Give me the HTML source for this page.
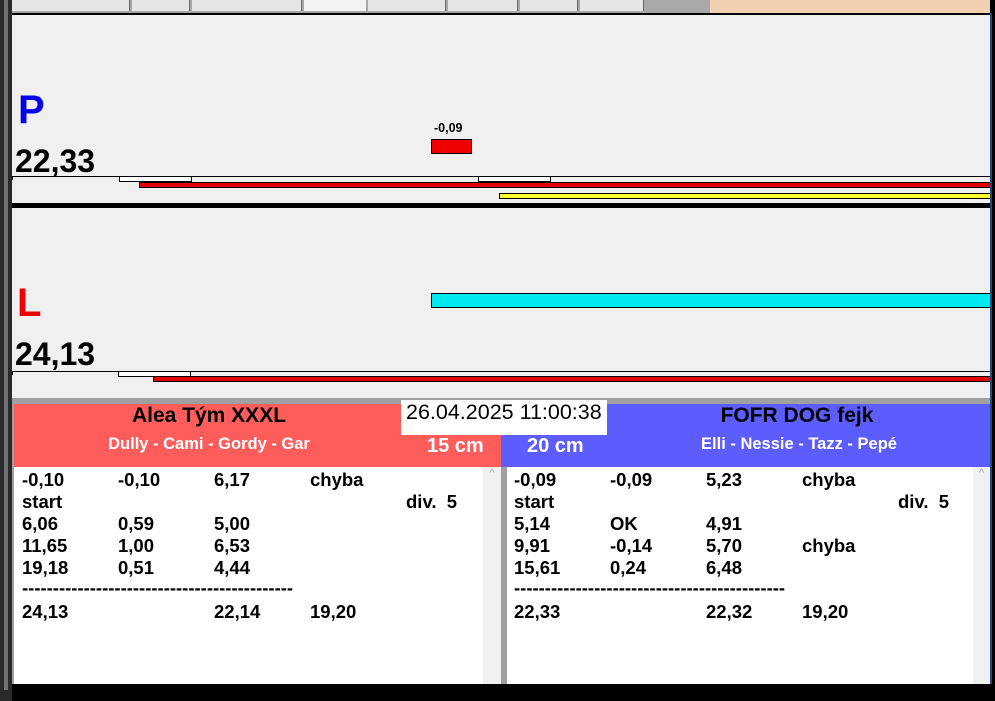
<!DOCTYPE html><html><head><meta charset="utf-8"><style>
*{margin:0;padding:0;box-sizing:border-box}
body{width:995px;height:701px;background:#000;position:relative;overflow:hidden;font-family:"Liberation Sans",Arial,sans-serif}
.a{position:absolute}
.b{font-weight:bold}
.row{position:absolute;font-weight:bold;font-size:18.5px;color:#000;white-space:nowrap}
</style></head><body>
<div class="a" style="left:0;top:0;width:990px;height:13px;background:#a8a8a8"></div>
<div class="a" style="left:710px;top:0;width:280px;height:13px;background:#f0d0b0"></div>
<div class="a" style="left:6px;top:0;width:700px;height:11px;display:flex;gap:2px">
<div style="width:124px;background:#e6e6e6;border-right:1px solid #666"></div><div style="width:58px;background:#e6e6e6;border-right:1px solid #666"></div><div style="width:110px;background:#e6e6e6;border-right:1px solid #666"></div><div style="width:62px;background:#f4f4f4"></div><div style="width:78px;background:#e6e6e6;border-right:1px solid #666"></div><div style="width:70px;background:#e6e6e6;border-right:1px solid #666"></div><div style="width:58px;background:#e6e6e6;border-right:1px solid #666"></div><div style="width:64px;background:#e6e6e6;border-right:1px solid #666"></div></div>
<div class="a" style="left:0;top:0;width:12px;height:701px;background:#2a2a2a"></div>
<div class="a" style="left:4px;top:0;width:4px;height:690px;background:#707070"></div>
<!-- upper panel -->
<div class="a" style="left:12px;top:13px;width:978px;height:191px;background:#f0f0f0;border-top:2px solid #000"></div>
<div class="a b" style="left:18px;top:88px;font-size:40px;color:#0000ee">P</div>
<div class="a b" style="left:15px;top:143px;font-size:32px">22,33</div>
<div class="a b" style="left:434px;top:121px;font-size:12.5px">-0,09</div>
<div class="a" style="left:431px;top:139px;width:41px;height:15px;background:#f00000;border:1px solid #000"></div>
<div class="a" style="left:12px;top:176px;width:978px;height:1px;background:#000"></div>
<div class="a" style="left:12px;top:176px;width:1px;height:4px;background:#000"></div>
<div class="a" style="left:119px;top:176px;width:73px;height:6px;background:#fff;border:1px solid #000"></div>
<div class="a" style="left:478px;top:176px;width:73px;height:6px;background:#fff;border:1px solid #000"></div>
<div class="a" style="left:139px;top:182px;width:851px;height:6px;background:#e00000;border:1px solid #000;border-right:none"></div>
<div class="a" style="left:499px;top:193px;width:491px;height:6px;background:#ffff30;border:1px solid #000;border-right:none"></div>
<div class="a" style="left:12px;top:203px;width:978px;height:5px;background:#000"></div>
<!-- lower panel -->
<div class="a" style="left:12px;top:208px;width:978px;height:190px;background:#f0f0f0"></div>
<div class="a b" style="left:17px;top:281px;font-size:40px;color:#ee0000">L</div>
<div class="a b" style="left:15px;top:336px;font-size:32px">24,13</div>
<div class="a" style="left:431px;top:293px;width:559px;height:15px;background:#00e8f0;border:1px solid #000;border-right:none"></div>
<div class="a" style="left:12px;top:371px;width:978px;height:1px;background:#000"></div>
<div class="a" style="left:12px;top:371px;width:1px;height:4px;background:#000"></div>
<div class="a" style="left:118px;top:371px;width:73px;height:6px;background:#fff;border:1px solid #000"></div>
<div class="a" style="left:153px;top:376px;width:837px;height:6px;background:#e00000;border:1px solid #000;border-right:none"></div>
<!-- bottom -->
<div class="a" style="left:12px;top:398px;width:978px;height:286px;background:#a0a0a0"></div>
<div class="a" style="left:14px;top:404px;width:487px;height:63px;background:#ff5c5c"></div>
<div class="a" style="left:501px;top:404px;width:489px;height:63px;background:#5c5cff"></div>
<div class="a b" style="left:9px;top:404px;width:400px;text-align:center;font-size:21px;color:#000">Alea Tým XXXL</div>
<div class="a b" style="left:9px;top:435px;width:400px;text-align:center;font-size:16.5px;color:#fff">Dully - Cami - Gordy - Gar</div>
<div class="a b" style="left:597px;top:404px;width:400px;text-align:center;font-size:21px;color:#000">FOFR DOG fejk</div>
<div class="a b" style="left:599px;top:435px;width:400px;text-align:center;font-size:16.5px;color:#fff">Elli - Nessie - Tazz - Pepé</div>
<div class="a b" style="left:427px;top:435px;font-size:20px;color:#fff">15 cm</div>
<div class="a b" style="left:527px;top:435px;font-size:20px;color:#fff">20 cm</div>
<div class="a" style="left:401px;top:400px;width:206px;height:35px;background:#fff;font-size:21.5px;padding:0 0 0 5px;white-space:nowrap">26.04.2025 11:00:38</div>
<div class="a" style="left:14px;top:467px;width:469px;height:217px;background:#fff"></div>
<div class="a" style="left:483px;top:467px;width:18px;height:217px;background:#f0f0f0;color:#aaa;font-size:11px;text-align:center">^</div>
<div class="a" style="left:507px;top:467px;width:466px;height:217px;background:#fff"></div>
<div class="a" style="left:973px;top:467px;width:17px;height:217px;background:#f0f0f0;color:#aaa;font-size:11px;text-align:center">^</div>
<div class="a" style="left:990px;top:13px;width:2px;height:671px;background:#1a4a8a"></div>
<div class="row" style="left:22px;top:469px">-0,10</div><div class="row" style="left:118px;top:469px">-0,10</div><div class="row" style="left:214px;top:469px">6,17</div><div class="row" style="left:310px;top:469px">chyba</div>
<div class="row" style="left:22px;top:491px">start</div><div class="row" style="left:406px;top:491px">div.&nbsp; 5</div>
<div class="row" style="left:22px;top:513px">6,06</div><div class="row" style="left:118px;top:513px">0,59</div><div class="row" style="left:214px;top:513px">5,00</div>
<div class="row" style="left:22px;top:535px">11,65</div><div class="row" style="left:118px;top:535px">1,00</div><div class="row" style="left:214px;top:535px">6,53</div>
<div class="row" style="left:22px;top:557px">19,18</div><div class="row" style="left:118px;top:557px">0,51</div><div class="row" style="left:214px;top:557px">4,44</div>
<div class="row" style="left:22px;top:577px">--------------------------------------------</div>
<div class="row" style="left:22px;top:601px">24,13</div><div class="row" style="left:214px;top:601px">22,14</div><div class="row" style="left:310px;top:601px">19,20</div>
<div class="row" style="left:514px;top:469px">-0,09</div><div class="row" style="left:610px;top:469px">-0,09</div><div class="row" style="left:706px;top:469px">5,23</div><div class="row" style="left:802px;top:469px">chyba</div>
<div class="row" style="left:514px;top:491px">start</div><div class="row" style="left:898px;top:491px">div.&nbsp; 5</div>
<div class="row" style="left:514px;top:513px">5,14</div><div class="row" style="left:610px;top:513px">OK</div><div class="row" style="left:706px;top:513px">4,91</div>
<div class="row" style="left:514px;top:535px">9,91</div><div class="row" style="left:610px;top:535px">-0,14</div><div class="row" style="left:706px;top:535px">5,70</div><div class="row" style="left:802px;top:535px">chyba</div>
<div class="row" style="left:514px;top:557px">15,61</div><div class="row" style="left:610px;top:557px">0,24</div><div class="row" style="left:706px;top:557px">6,48</div>
<div class="row" style="left:514px;top:577px">--------------------------------------------</div>
<div class="row" style="left:514px;top:601px">22,33</div><div class="row" style="left:706px;top:601px">22,32</div><div class="row" style="left:802px;top:601px">19,20</div>
</body></html>
